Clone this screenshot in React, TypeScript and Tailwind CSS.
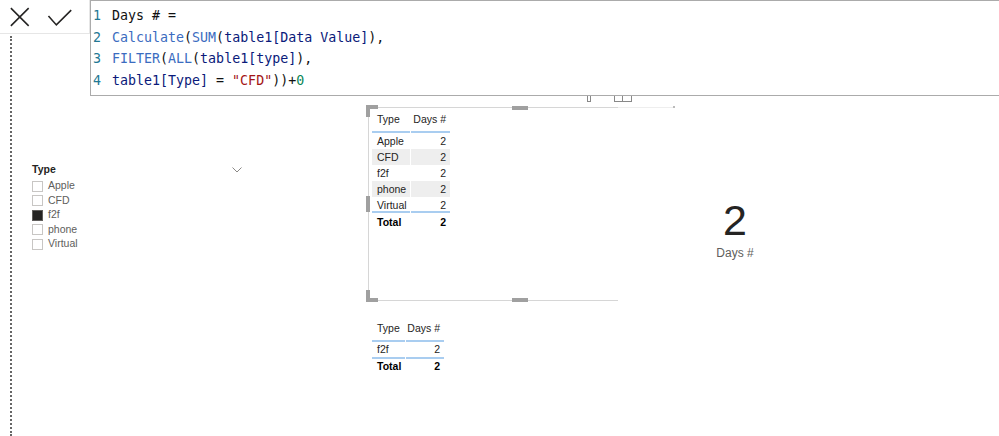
import React from 'react';

const ui = { fontFamily: '"Liberation Sans", Arial, sans-serif' };
const mono = { fontFamily: '"DejaVu Sans Mono", "Liberation Mono", monospace' };

const fn = 'text-[#3b6cc0]';
const col = 'text-[#0a1a7a]';

const codeLines: React.ReactNode[] = [
  <>Days # =</>,
  <>
    <span className={fn}>Calculate</span>(<span className={fn}>SUM</span>(
    <span className={col}>table1[Data Value]</span>),
  </>,
  <>
    <span className={fn}>FILTER</span>(<span className={fn}>ALL</span>(<span className={col}>table1[type]</span>),
  </>,
  <>
    <span className={col}>table1[Type]</span> = <span className="text-[#a31515]">"CFD"</span>))+
    <span className="text-[#098658]">0</span>
  </>,
];

const slicerItems = ['Apple', 'CFD', 'f2f', 'phone', 'Virtual'];
const rows = ['Apple', 'CFD', 'f2f', 'phone', 'Virtual'];

function Handle({ className }: { className: string }) {
  return <div className={`absolute bg-[#a0a0a0] ${className}`} />;
}

export default function App() {
  return (
    <div className="relative w-[999px] h-[436px] overflow-hidden bg-white text-[#252423]" style={ui}>
      {/* formula bar */}
      <div className="flex items-start">
        <div className="flex h-[34px] w-[90px] items-center border-r border-b border-[#e6e6e6]">
          <svg width="90" height="34" viewBox="0 0 90 34">
            <path d="M11 8 L29 26 M29 8 L11 26" stroke="#252423" strokeWidth="1.6" fill="none" />
            <path d="M49 16 L57 25 L72 10" stroke="#252423" strokeWidth="1.6" fill="none" />
          </svg>
        </div>
        <div
          className="relative z-10 h-[96px] flex-1 border-t border-l border-b border-[#ababab] bg-white pt-[4px] text-[13.3px] leading-[21.7px] text-[#111]"
          style={mono}
        >
          {codeLines.map((line, i) => (
            <div key={i} className="flex whitespace-pre">
              <span className="w-[21px] pl-[2px] text-[#237893]">{i + 1}</span>
              <span>{line}</span>
            </div>
          ))}
        </div>
      </div>

      {/* dotted page edge */}
      <div className="absolute left-[10px] top-[36px] bottom-0 border-l-2 border-dotted border-[#666]" />

      {/* slicer */}
      <div className="absolute left-[32px] top-[162px] w-[212px] text-[10.5px]">
        <div className="flex h-[16px] items-center justify-between">
          <span className="font-bold text-[#252423]">Type</span>
          <svg width="10" height="6" viewBox="0 0 10 6" className="mr-[2px]">
            <path d="M0.5 0.5 L5 5 L9.5 0.5" stroke="#8a8886" strokeWidth="1" fill="none" />
          </svg>
        </div>
        <div className="pt-[1px]">
          {slicerItems.map((s) => (
            <div key={s} className="flex h-[14.5px] items-center gap-[5px]">
              <span
                className={
                  s === 'f2f'
                    ? 'h-[11px] w-[11px] border border-[#605e5c] bg-[#252423]'
                    : 'h-[11px] w-[11px] border border-[#c8c6c4] bg-white'
                }
              />
              <span className="text-[#605e5c]">{s}</span>
            </div>
          ))}
        </div>
      </div>

      {/* header icons of selected visual */}
      <div className="absolute left-[587px] top-[95px] h-[7px] w-[4px] border border-t-0 border-[#888]" />
      <div className="absolute left-[614px] top-[95px] flex h-[7px]">
        <div className="h-[7px] w-[9px] border border-[#888]" />
        <div className="h-[7px] w-[9px] border border-l-0 border-[#888]" />
      </div>

      {/* selected table visual frame */}
      <div className="absolute left-[368px] top-[107px] h-[194px] w-[250px] border-l border-t border-b border-[#d6d6d6]" />
      <div className="absolute left-[618px] top-[107px] h-px w-[57px] bg-[#eeeeee]" />
      <div className="absolute left-[673px] top-[106px] h-[2px] w-[2px] bg-[#bbb]" />
      <Handle className="left-[366px] top-[105px] h-[4px] w-[12px]" />
      <Handle className="left-[366px] top-[105px] h-[12px] w-[4px]" />
      <Handle className="left-[512px] top-[106px] h-[4px] w-[16px]" />
      <Handle className="left-[366px] top-[196px] h-[16px] w-[4px]" />
      <Handle className="left-[366px] top-[290px] h-[12px] w-[4px]" />
      <Handle className="left-[366px] top-[298px] h-[4px] w-[12px]" />
      <Handle className="left-[512px] top-[298px] h-[4px] w-[16px]" />

      {/* table 1 */}
      <div className="absolute left-[372px] top-[108px] grid grid-cols-[38px_39px] gap-x-px text-[10.5px]">
        <div className="h-[25px] border-b-2 border-[#a9cdf0] pl-[5px] pt-[3px] leading-[16px] text-[#252423]">Type</div>
        <div className="h-[25px] border-b-2 border-[#a9cdf0] pr-[4px] pt-[3px] text-right leading-[16px] text-[#252423]">
          Days #
        </div>
        {rows.map((r, i) => {
          const bg = i % 2 === 1 ? 'bg-[#eeeeee]' : 'bg-white';
          const last = i === rows.length - 1 ? 'border-b-2 border-[#a9cdf0]' : '';
          return (
            <React.Fragment key={r}>
              <div className={`h-[16px] pl-[5px] leading-[16px] text-[#252423] ${bg} ${last}`}>{r}</div>
              <div className={`h-[16px] pr-[4px] text-right leading-[16px] text-[#252423] ${bg} ${last}`}>2</div>
            </React.Fragment>
          );
        })}
        <div className="h-[17px] pl-[5px] pt-[1px] font-bold leading-[16px] text-black">Total</div>
        <div className="h-[17px] pr-[4px] pt-[1px] text-right font-bold leading-[16px] text-black">2</div>
      </div>

      {/* table 2 */}
      <div className="absolute left-[372px] top-[317px] grid grid-cols-[33px_38px] gap-x-px text-[10.5px]">
        <div className="h-[25px] border-b-2 border-[#a9cdf0] pl-[5px] pt-[3px] leading-[16px] text-[#252423]">Type</div>
        <div className="h-[25px] border-b-2 border-[#a9cdf0] pr-[4px] pt-[3px] text-right leading-[16px] text-[#252423]">
          Days #
        </div>
        <div className="h-[17px] border-b-2 border-[#a9cdf0] pl-[5px] leading-[15px] text-[#252423]">f2f</div>
        <div className="h-[17px] border-b-2 border-[#a9cdf0] pr-[4px] text-right leading-[15px] text-[#252423]">2</div>
        <div className="h-[16px] pl-[5px] font-bold leading-[15px] text-black">Total</div>
        <div className="h-[16px] pr-[4px] text-right font-bold leading-[15px] text-black">2</div>
      </div>

      {/* card */}
      <div className="absolute left-[675px] top-[195px] flex w-[120px] flex-col items-center">
        <div className="text-[43px] leading-[50px] text-[#252423]">2</div>
        <div className="mt-[1px] text-[12px] leading-[14px] text-[#605e5c]">Days #</div>
      </div>
    </div>
  );
}
